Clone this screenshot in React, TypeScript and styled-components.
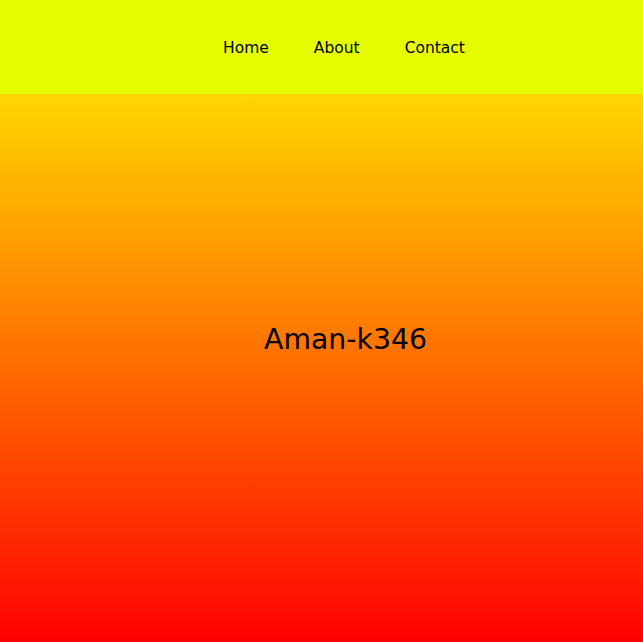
import React from "react";
import styled, { createGlobalStyle } from "styled-components";

const Global = createGlobalStyle`
  html, body { margin: 0; padding: 0; }
  body { font-family: "DejaVu Sans", Verdana, sans-serif; }
`;

const Page = styled.div`
  display: flex;
  flex-direction: column;
  height: 642px;
`;

const Header = styled.header`
  height: 94px;
  background: #e6ff00;
  display: flex;
  align-items: center;
  justify-content: center;
  padding-left: 45px;
  padding-top: 2px;
  box-sizing: border-box;
`;

const NavList = styled.nav`
  display: flex;
  gap: 45px;
`;

const NavLink = styled.a`
  color: #000;
  font-size: 15.5px;
  text-decoration: none;
`;

const Hero = styled.main`
  flex: 1;
  background: linear-gradient(to bottom, #ffd700, #ff0000);
  display: flex;
  align-items: center;
  justify-content: center;
  padding-left: 48px;
  padding-bottom: 58px;
`;

const Title = styled.h1`
  margin: 0;
  font-size: 28.3px;
  font-weight: normal;
  color: #000;
`;

export default function App() {
  return (
    <>
      <Global />
      <Page>
        <Header>
          <NavList>
            <NavLink href="#">Home</NavLink>
            <NavLink href="#">About</NavLink>
            <NavLink href="#">Contact</NavLink>
          </NavList>
        </Header>
        <Hero>
          <Title>Aman-k346</Title>
        </Hero>
      </Page>
    </>
  );
}
